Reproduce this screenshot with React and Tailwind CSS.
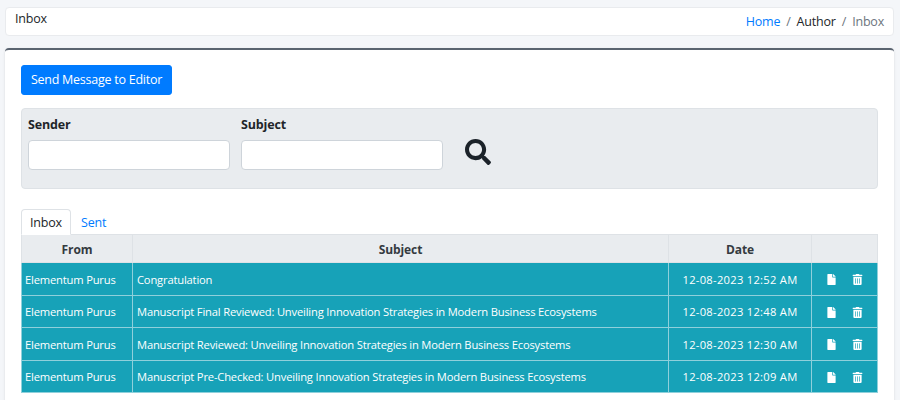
import { FaSearch, FaFile, FaTrashAlt } from 'react-icons/fa';

const messages = [
  { from: 'Elementum Purus', subject: 'Congratulation', date: '12-08-2023 12:52 AM' },
  { from: 'Elementum Purus', subject: 'Manuscript Final Reviewed: Unveiling Innovation Strategies in Modern Business Ecosystems', date: '12-08-2023 12:48 AM' },
  { from: 'Elementum Purus', subject: 'Manuscript Reviewed: Unveiling Innovation Strategies in Modern Business Ecosystems', date: '12-08-2023 12:30 AM' },
  { from: 'Elementum Purus', subject: 'Manuscript Pre-Checked: Unveiling Innovation Strategies in Modern Business Ecosystems', date: '12-08-2023 12:09 AM' },
];

const Field = ({ label }) => (
  <div className="w-[202px]">
    <label className="block text-[12.5px] tracking-[-0.15px] leading-[18px] font-bold text-[#212529] mb-[6px]">{label}</label>
    <input className="block w-full h-[30px] bg-white border border-[#ced4da] rounded-[4px]" />
  </div>
);

export default function App() {
  return (
    <div className="h-[400px] overflow-hidden bg-[#f4f6f9] pl-[5px] pr-[6px] pt-[7px] font-['Open_Sans',sans-serif] text-[12px] text-[#212529]">
      <div className="flex justify-between h-[29px] pl-[9px] pr-[9px] bg-white rounded-[4px] border border-[#e9ebee]">
        <div className="text-[12.5px] tracking-[-0.2px] leading-[22px]">Inbox</div>
        <div className="flex gap-[6px] text-[12.5px] tracking-[-0.2px] leading-[27px]">
          <span className="text-[#007bff]">Home</span>
          <span className="text-[#6c757d]">/</span>
          <span>Author</span>
          <span className="text-[#6c757d]">/</span>
          <span className="text-[#6c757d]">Inbox</span>
        </div>
      </div>

      <div className="mt-[12px] h-[360px] bg-white border-t-2 border-[#5a6470] rounded-t-[4px] shadow px-[16px] pt-[15px]">
        <button className="h-[30px] w-[151px] bg-[#007bff] text-white text-[12.5px] tracking-[-0.25px] rounded-[3px] border border-[#007bff]">
          Send Message to Editor
        </button>

        <div className="flex mt-[13px] h-[81px] bg-[#e9ecef] border border-[#dee2e6] rounded-[4px] pl-[6px] pt-[7px]">
          <div className="flex gap-[11px]">
            <Field label="Sender" />
            <Field label="Subject" />
          </div>
          <FaSearch className="ml-[22px] mt-[23px] text-[#1b2229]" size={26} />
        </div>

        <div className="flex mt-[20px] h-[25px] text-[12.5px] tracking-[-0.2px]">
          <div className="w-[50px] h-[26px] bg-white border border-[#dee2e6] border-b-white rounded-t-[4px] text-center leading-[25px] z-10">Inbox</div>
          <div className="ml-[10px] text-[#007bff] leading-[27px]">Sent</div>
        </div>

        <table className="w-[856px] table-fixed border-collapse text-[11.2px] tracking-[-0.18px]">
          <colgroup>
            <col className="w-[111px]" />
            <col className="w-[536px]" />
            <col className="w-[143px]" />
            <col className="w-[66px]" />
          </colgroup>
          <thead>
            <tr className="h-[28px] bg-[#e9ecef] text-[#343a40] text-[12px] tracking-[-0.1px]">
              <th className="border border-[#dee2e6] pt-[2px] font-bold">From</th>
              <th className="border border-[#dee2e6] pt-[2px] font-bold">Subject</th>
              <th className="border border-[#dee2e6] pt-[2px] font-bold">Date</th>
              <th className="border border-[#dee2e6]"></th>
            </tr>
          </thead>
          <tbody>
            {messages.map((m, i) => (
              <tr key={i} className="h-[32.5px] bg-[#17a2b8] text-white">
                <td className="border border-[#8fd0db] px-[3px] pt-[3px] whitespace-nowrap">{m.from}</td>
                <td className="border border-[#8fd0db] px-[4px] pt-[3px] whitespace-nowrap">{m.subject}</td>
                <td className="border border-[#8fd0db] pt-[3px] text-center whitespace-nowrap tracking-[0.27px]">{m.date}</td>
                <td className="border border-[#8fd0db] pt-[2px]">
                  <div className="flex justify-center gap-[15px]">
                    <FaFile size={11} />
                    <FaTrashAlt size={11} />
                  </div>
                </td>
              </tr>
            ))}
          </tbody>
        </table>
      </div>
    </div>
  );
}
